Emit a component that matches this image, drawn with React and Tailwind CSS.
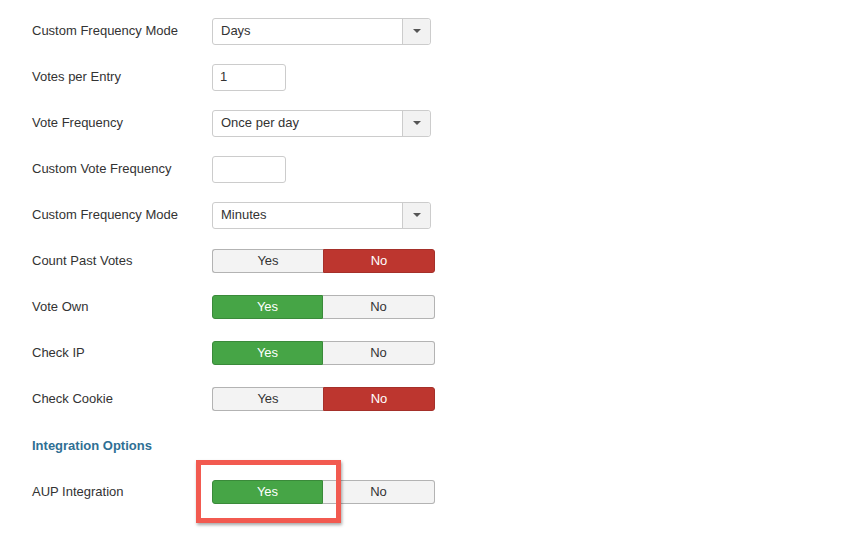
import React from "react";

function Select({ value }) {
  return (
    <div className="flex h-[27px] w-[219px] rounded-[3px] border border-[#cccccc] bg-white">
      <div className="flex flex-1 items-center pl-[8px] text-[13px] text-[#333]">{value}</div>
      <div className="flex w-[28px] items-center justify-center rounded-r-[3px] border-l border-[#cccccc] bg-[#f2f2f2]">
        <div className="h-0 w-0 border-x-[4px] border-t-[4px] border-x-transparent border-t-[#555]" />
      </div>
    </div>
  );
}

function Input({ value }) {
  return (
    <div className="flex h-[27px] w-[74px] items-center rounded-[3px] border border-[#cccccc] bg-white pl-[7px] text-[13px] text-[#333]">
      {value}
    </div>
  );
}

function Toggle({ yes }) {
  return (
    <div className="flex h-[24px] w-[223px] text-[13px]">
      {yes ? (
        <>
          <div className="flex w-[111px] items-center justify-center rounded-l-[3px] border border-[#3a8a3a] bg-[#46a546] text-white">Yes</div>
          <div className="flex w-[112px] items-center justify-center rounded-r-[3px] border border-l-0 border-[#b3b3b3] bg-[#f3f3f3] text-[#333]">No</div>
        </>
      ) : (
        <>
          <div className="flex w-[111px] items-center justify-center rounded-l-[3px] border border-r-0 border-[#b3b3b3] bg-[#f3f3f3] text-[#333]">Yes</div>
          <div className="flex w-[112px] items-center justify-center rounded-r-[3px] border border-[#a5302a] bg-[#bd362f] text-white">No</div>
        </>
      )}
    </div>
  );
}

function Row({ label, children }) {
  return (
    <div className="relative flex h-[46px] items-center">
      <div className="w-[180px] text-[13px] text-[#333]">{label}</div>
      {children}
    </div>
  );
}

export default function App() {
  return (
    <div
      className="h-[534px] w-[844px] overflow-hidden bg-white pl-[32px] pt-[8px]"
      style={{ fontFamily: '"Liberation Sans", Arial, sans-serif' }}
    >
      <Row label="Custom Frequency Mode"><Select value="Days" /></Row>
      <Row label="Votes per Entry"><Input value="1" /></Row>
      <Row label="Vote Frequency"><Select value="Once per day" /></Row>
      <Row label="Custom Vote Frequency"><Input value="" /></Row>
      <Row label="Custom Frequency Mode"><Select value="Minutes" /></Row>
      <Row label="Count Past Votes"><Toggle yes={false} /></Row>
      <Row label="Vote Own"><Toggle yes={true} /></Row>
      <Row label="Check IP"><Toggle yes={true} /></Row>
      <Row label="Check Cookie"><Toggle yes={false} /></Row>
      <div className="flex h-[47px] items-center text-[13px] font-bold text-[#2f6f94]">Integration Options</div>
      <div className="relative flex h-[46px] items-center">
        <div className="w-[180px] text-[13px] text-[#333]">AUP Integration</div>
        <Toggle yes={true} />
        <div className="pointer-events-none absolute left-[164px] top-[-9px] h-[63px] w-[145px] border-[5px] border-[#f25a50] shadow-[1px_2px_3px_rgba(0,0,0,0.35)]" />
      </div>
    </div>
  );
}
